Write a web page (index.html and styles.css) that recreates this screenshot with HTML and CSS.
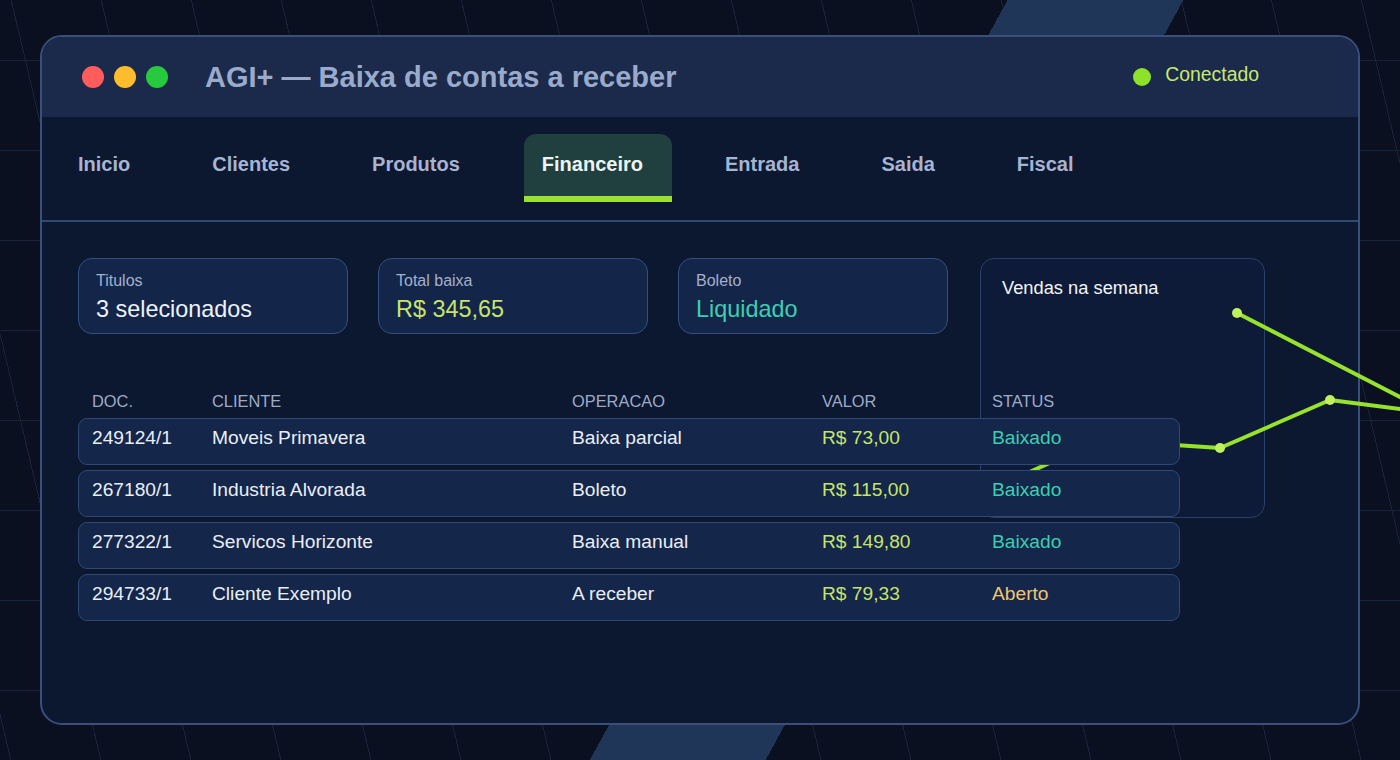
FILE: index.html
```html
<!DOCTYPE html>
<html lang="pt-BR">
<head>
<meta charset="utf-8">
<title>AGI+ — Baixa de contas a receber</title>
<link rel="stylesheet" href="styles.css">
</head>
<body>
<div class="scene">
  <div class="window">
    <header class="titlebar">
      <div class="lights">
        <span class="light red"></span>
        <span class="light yellow"></span>
        <span class="light green"></span>
      </div>
      <h1 class="title">AGI+ — Baixa de contas a receber</h1>
      <div class="status"><span class="status-dot"></span><span class="status-text">Conectado</span></div>
    </header>
    <nav class="tabs">
      <span class="tab">Inicio</span>
      <span class="tab">Clientes</span>
      <span class="tab">Produtos</span>
      <span class="tab active">Financeiro</span>
      <span class="tab">Entrada</span>
      <span class="tab">Saida</span>
      <span class="tab">Fiscal</span>
    </nav>
    <main class="content">
      <div class="stat">
        <div class="stat-label">Titulos</div>
        <div class="stat-value">3 selecionados</div>
      </div>
      <div class="stat">
        <div class="stat-label">Total baixa</div>
        <div class="stat-value lime">R$ 345,65</div>
      </div>
      <div class="stat">
        <div class="stat-label">Boleto</div>
        <div class="stat-value teal">Liquidado</div>
      </div>
      <section class="chart-card">
        <h2 class="chart-title">Vendas na semana</h2>
        <svg class="chart" width="460" height="240" viewBox="0 0 460 240">
          <polyline points="9,231 119,181 239,189 349,141 450,154 256,54" fill="none" stroke="#97e22c" stroke-width="4" stroke-linejoin="round"/>
          <circle cx="256" cy="54" r="5" fill="#bff15e"/>
          <circle cx="239" cy="189" r="5" fill="#bff15e"/>
          <circle cx="349" cy="141" r="5" fill="#bff15e"/>
        </svg>
      </section>
      <div class="table">
        <div class="row-grid thead">
          <span>DOC.</span><span>CLIENTE</span><span>OPERACAO</span><span>VALOR</span><span>STATUS</span>
        </div>
        <div class="row-grid trow">
          <span>249124/1</span><span>Moveis Primavera</span><span>Baixa parcial</span><span class="lime">R$ 73,00</span><span class="teal">Baixado</span>
        </div>
        <div class="row-grid trow">
          <span>267180/1</span><span>Industria Alvorada</span><span>Boleto</span><span class="lime">R$ 115,00</span><span class="teal">Baixado</span>
        </div>
        <div class="row-grid trow">
          <span>277322/1</span><span>Servicos Horizonte</span><span>Baixa manual</span><span class="lime">R$ 149,80</span><span class="teal">Baixado</span>
        </div>
        <div class="row-grid trow">
          <span>294733/1</span><span>Cliente Exemplo</span><span>A receber</span><span class="lime">R$ 79,33</span><span class="amber">Aberto</span>
        </div>
      </div>
    </main>
  </div>
</div>
</body>
</html>
```
FILE: styles.css
```css
* { box-sizing: border-box; }

html, body {
  margin: 0;
  padding: 0;
  background: #0a1020;
}

body {
  font-family: "Liberation Sans", Arial, sans-serif;
  overflow: hidden;
}

.scene {
  width: 1400px;
  height: 760px;
  overflow: hidden;
  padding: 35px 40px;
  background:
    linear-gradient(118.8deg, transparent 883px, #1f3659 883px, #1f3659 1037px, transparent 1037px),
    repeating-linear-gradient(180deg, transparent 0 60px, #16233b 60px 61px, transparent 61px 90px),
    repeating-linear-gradient(76.7deg, transparent 0 10px, #16233b 10px 11px, transparent 11px 87.6px),
    #0a1020;
}

.window {
  width: 1320px;
  height: 690px;
  border: 2px solid #3a4f7c;
  border-radius: 22px;
  background: #0c1730;
}

.titlebar {
  height: 80px;
  display: flex;
  align-items: center;
  padding: 0 99px 0 40px;
  background: #1b2a4b;
  border-radius: 20px 20px 0 0;
}

.lights {
  display: flex;
  gap: 10px;
}

.light {
  width: 22px;
  height: 22px;
  border-radius: 50%;
}
.light.red { background: #ff5c5c; }
.light.yellow { background: #ffbd2e; }
.light.green { background: #27c93f; }

.title {
  margin: 0 0 0 37px;
  font-size: 29px;
  font-weight: 700;
  color: #9aaacb;
  line-height: 34px;
}

.status {
  margin-left: auto;
  display: flex;
  align-items: center;
  gap: 14px;
}

.status-dot {
  width: 18px;
  height: 18px;
  border-radius: 50%;
  background: #8fe22a;
}

.status-text {
  font-size: 19.4px;
  line-height: 22px;
  color: #c8e86e;
  padding-bottom: 6px;
}

.tabs {
  display: flex;
  gap: 46px;
  padding: 17px 18px 18px;
  border-bottom: 2px solid #33486f;
}

.tab {
  height: 68px;
  display: flex;
  align-items: center;
  padding: 0 18px 8px;
  font-size: 20px;
  font-weight: 700;
  color: #a7b4d1;
}

.tab.active {
  background: #1f403e;
  border-radius: 12px 12px 0 0;
  border-bottom: 6px solid #9be22e;
  padding: 0 29px 2px 18px;
  margin-right: -11px;
  color: #eef3f3;
}

.content {
  display: grid;
  grid-template-columns: 270px 270px 270px 287px;
  grid-template-rows: 76px auto;
  column-gap: 30px;
  padding: 36px;
}

.stat {
  grid-row: 1;
  background: #14254a;
  border: 1px solid #34507e;
  border-radius: 14px;
  padding: 13px 17px 11px;
}

.stat-label {
  font-size: 16px;
  line-height: 18px;
  color: #a3b1cb;
  margin-bottom: 6px;
}

.stat-value {
  font-size: 23.4px;
  line-height: 26px;
  color: #eef2f9;
}

.lime { color: #c6e46c; }
.teal { color: #3ccfb0; }
.amber { color: #f2c572; }

.chart-card {
  grid-column: 4;
  grid-row: 1 / span 2;
  align-self: start;
  margin-left: 2px;
  width: 285px;
  height: 260px;
  position: relative;
  z-index: 1;
  background: #0e1b38;
  border: 1px solid #2b4069;
  border-radius: 14px;
  padding: 18px 21px;
}

.chart-title {
  margin: 0;
  font-size: 18.3px;
  line-height: 22px;
  font-weight: 400;
  color: #f2f5fb;
}

.chart {
  position: absolute;
  left: 0;
  top: 0;
  overflow: visible;
}

.table {
  grid-column: 1 / -1;
  grid-row: 2;
  width: 1102px;
  margin-top: 58px;
  position: relative;
  z-index: 2;
  display: flex;
  flex-direction: column;
  gap: 5px;
}

.row-grid {
  display: grid;
  grid-template-columns: 120px 360px 250px 170px 1fr;
  padding: 0 14px;
}

.thead {
  font-size: 16.4px;
  line-height: 18px;
  color: #9eabc6;
  padding-bottom: 3px;
}

.trow {
  height: 47px;
  background: #142649;
  border: 1px solid #2f4874;
  border-radius: 9px;
  padding: 8px 13px 0;
  font-size: 19.2px;
  line-height: 22px;
  color: #e9eef7;
}
```
